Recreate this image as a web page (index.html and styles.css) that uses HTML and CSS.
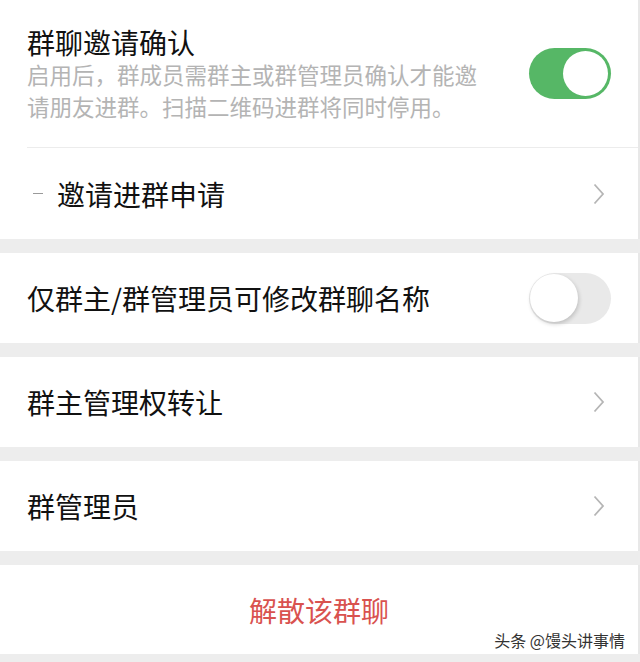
FILE: index.html
```html
<!DOCTYPE html>
<html lang="zh-CN">
<head>
    <meta charset="UTF-8">
    <meta name="viewport" content="width=device-width, initial-scale=1.0">
    <title>群管理</title>
    <link rel="stylesheet" href="styles.css">
</head>
<body>
<main class="settings">
    <section class="group">
        <div class="cell cell-intro">
            <div class="cell-body">
                <div class="cell-title">群聊邀请确认</div>
                <p class="cell-desc">启用后，群成员需群主或群管理员确认才能邀请朋友进群。扫描二维码进群将同时停用。</p>
            </div>
            <span class="switch on" role="switch" aria-checked="true"></span>
        </div>
        <div class="cell cell-link">
            <span class="dash"></span>
            <span class="cell-title">邀请进群申请</span>
            <svg class="chevron" width="12" height="22" viewBox="0 0 12 22"><path d="M1.5 1.5 L10 11 L1.5 20.5" fill="none" stroke="#b5b5b5" stroke-width="1.8"/></svg>
        </div>
    </section>

    <section class="group">
        <div class="cell">
            <span class="cell-title">仅群主/群管理员可修改群聊名称</span>
            <span class="switch" role="switch" aria-checked="false"></span>
        </div>
    </section>

    <section class="group">
        <div class="cell cell-link">
            <span class="cell-title">群主管理权转让</span>
            <svg class="chevron" width="12" height="22" viewBox="0 0 12 22"><path d="M1.5 1.5 L10 11 L1.5 20.5" fill="none" stroke="#b5b5b5" stroke-width="1.8"/></svg>
        </div>
    </section>

    <section class="group">
        <div class="cell cell-link">
            <span class="cell-title">群管理员</span>
            <svg class="chevron" width="12" height="22" viewBox="0 0 12 22"><path d="M1.5 1.5 L10 11 L1.5 20.5" fill="none" stroke="#b5b5b5" stroke-width="1.8"/></svg>
        </div>
    </section>

    <section class="group">
        <div class="cell cell-danger">
            <span class="cell-title">解散该群聊</span>
        </div>
    </section>

    <div class="watermark">头条 @馒头讲事情</div>
</main>
</body>
</html>
```

FILE: styles.css
```css
html, body {
    margin: 0;
    padding: 0;
}
body {
    background: #ededed;
    font-family: "Noto Sans CJK SC", "Noto Sans", sans-serif;
    color: #111;
}
.settings {
    position: relative;
    width: 640px;
    height: 662px;
    display: flex;
    flex-direction: column;
    gap: 14px;
    overflow: hidden;
}
.group {
    background: #fff;
    border-right: 2px solid #e8e8e8;
    box-sizing: border-box;
}
.cell {
    height: 90px;
    display: flex;
    align-items: center;
    padding: 0 27px 0 27px;
    box-sizing: border-box;
}
.cell-title {
    font-size: 28px;
    line-height: 32px;
    flex: 1;
}
.cell-intro {
    height: 148px;
    border-bottom: 1px solid #ececec;
    margin-left: 27px;
    padding-left: 0;
    align-items: flex-start;
}
.cell-intro + .cell {
    height: 91px;
}
.cell-body {
    flex: 1;
    padding-top: 27px;
}
.cell-intro .cell-title {
    line-height: 30px;
    margin-bottom: 1px;
}
.cell-desc {
    margin: 0;
    max-width: 460px;
    font-size: 22.5px;
    line-height: 32px;
    color: #b4b4b4;
}
.cell-intro .switch {
    align-self: center;
    margin-top: -1px;
}
.dash {
    width: 10px;
    height: 1px;
    background: #9a9a9a;
    margin: 0 14px 0 6px;
}
.chevron {
    margin-right: 6px;
}
.switch {
    position: relative;
    width: 82px;
    height: 51px;
    border-radius: 26px;
    background: #e9e9e9;
    flex: none;
}
.switch::after {
    content: "";
    position: absolute;
    left: 1px;
    top: 1px;
    width: 48px;
    height: 48px;
    border-radius: 50%;
    background: #fff;
    box-shadow: 1px 2px 4px rgba(0, 0, 0, 0.18);
}
.switch.on {
    background: #56b766;
}
.switch.on::after {
    left: auto;
    right: 3px;
    top: 3px;
    width: 45px;
    height: 45px;
    box-shadow: none;
}
.cell-danger {
    height: 89px;
    justify-content: center;
    padding-top: 1px;
}
.cell-danger .cell-title {
    flex: none;
    color: #d9524f;
}
.watermark {
    position: absolute;
    right: 15px;
    bottom: 10px;
    font-size: 16px;
    color: #333;
    text-shadow: 0 0 2px #fff;
}
```
